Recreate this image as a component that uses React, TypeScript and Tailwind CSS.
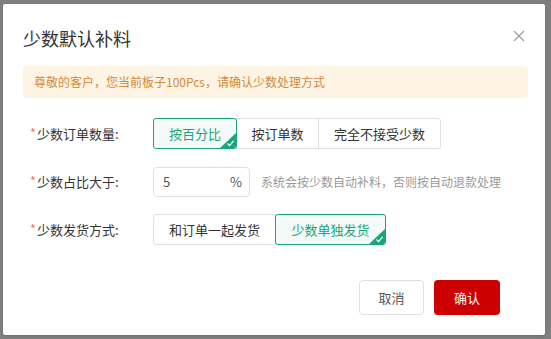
import React from "react";

const font = { fontFamily: '"Noto Sans CJK SC", "Noto Sans", sans-serif' };

function Check() {
  return (
    <span className="absolute right-0 bottom-0 w-[16px] h-[15px]">
      <svg width="16" height="15" viewBox="0 0 16 15" className="block">
        <polygon points="16,0 16,15 0,15" fill="#1aa57c" />
        <path d="M7.5 10.5 L9.6 12.6 L13.6 7.8" stroke="#fff" strokeWidth="1.2" fill="none" />
      </svg>
    </span>
  );
}

function Label({ text }: { text: string }) {
  return (
    <div className="w-[123px] flex items-center text-[13px] text-[#333]">
      <span className="text-[#f56c6c] w-[7px] text-[12px] -mt-[2px]">*</span>
      <span>{text}:</span>
    </div>
  );
}

export default function App() {
  return (
    <div className="w-[551px] h-[339px] bg-[#7f7f7f] pl-[3px] pt-[4px] overflow-hidden" style={font}>
      <div className="relative w-[542px] h-[331px] bg-white rounded-[2px] shadow">
        <div className="pt-[20px] pl-[20px] h-[48px]">
          <div className="text-[18px] leading-[28px] text-[#333]">少数默认补料</div>
        </div>
        <button className="absolute left-[510px] top-[26px] w-[12px] h-[12px]">
          <svg width="12" height="12" viewBox="0 0 12 12" className="block">
            <path d="M1 1 L11 11 M11 1 L1 11" stroke="#999" strokeWidth="1.1" />
          </svg>
        </button>
        <div className="ml-[20px] mt-[14px] w-[505px] h-[32px] rounded-[4px] bg-[#fdf4e4] pl-[11px] flex items-center text-[12px] text-[#d38b3a]">
          尊敬的客户，您当前板子100Pcs，请确认少数处理方式
        </div>

        <div className="pl-[27px] mt-[20px] flex items-center h-[31px]">
          <Label text="少数订单数量" />
          <div className="flex h-[31px] text-[13px] text-[#333]">
            <div className="relative w-[84px] h-[31px] flex items-center justify-center border border-[#1aa57c] bg-[#f4faf8] text-[#1aa57c] rounded-[3px] overflow-hidden z-10">
              按百分比
              <Check />
            </div>
            <div className="w-[83px] -ml-px h-[31px] flex items-center justify-center border border-[#dcdfe6]">按订单数</div>
            <div className="w-[123px] -ml-px h-[31px] flex items-center justify-center border border-[#dcdfe6] rounded-r-[3px]">完全不接受少数</div>
          </div>
        </div>

        <div className="pl-[27px] mt-[17px] flex items-center h-[31px]">
          <Label text="少数占比大于" />
          <div className="w-[97px] h-[30px] border border-[#dcdfe6] rounded-[4px] flex items-center justify-between pl-[9px] pr-[7px] text-[13px] text-[#555]">
            <span>5</span>
            <span>%</span>
          </div>
          <div className="ml-[11px] text-[12px] text-[#999]">系统会按少数自动补料，否则按自动退款处理</div>
        </div>

        <div className="pl-[27px] mt-[17px] flex items-center h-[31px]">
          <Label text="少数发货方式" />
          <div className="flex h-[31px] text-[13px] text-[#333]">
            <div className="w-[123px] h-[31px] flex items-center justify-center border border-[#dcdfe6] rounded-l-[3px]">和订单一起发货</div>
            <div className="relative w-[111px] -ml-px h-[31px] flex items-center justify-center border border-[#1aa57c] bg-[#f4faf8] text-[#1aa57c] rounded-[3px] overflow-hidden z-10">
              少数单独发货
              <Check />
            </div>
          </div>
        </div>

        <div className="mt-[35px] flex justify-end pr-[45px] gap-[10px]">
          <button className="w-[65px] h-[35px] border border-[#dcdfe6] rounded-[4px] bg-white text-[13px] text-[#555]">取消</button>
          <button className="w-[66px] h-[35px] rounded-[4px] bg-[#cc0000] text-[13px] text-white">确认</button>
        </div>
      </div>
    </div>
  );
}
